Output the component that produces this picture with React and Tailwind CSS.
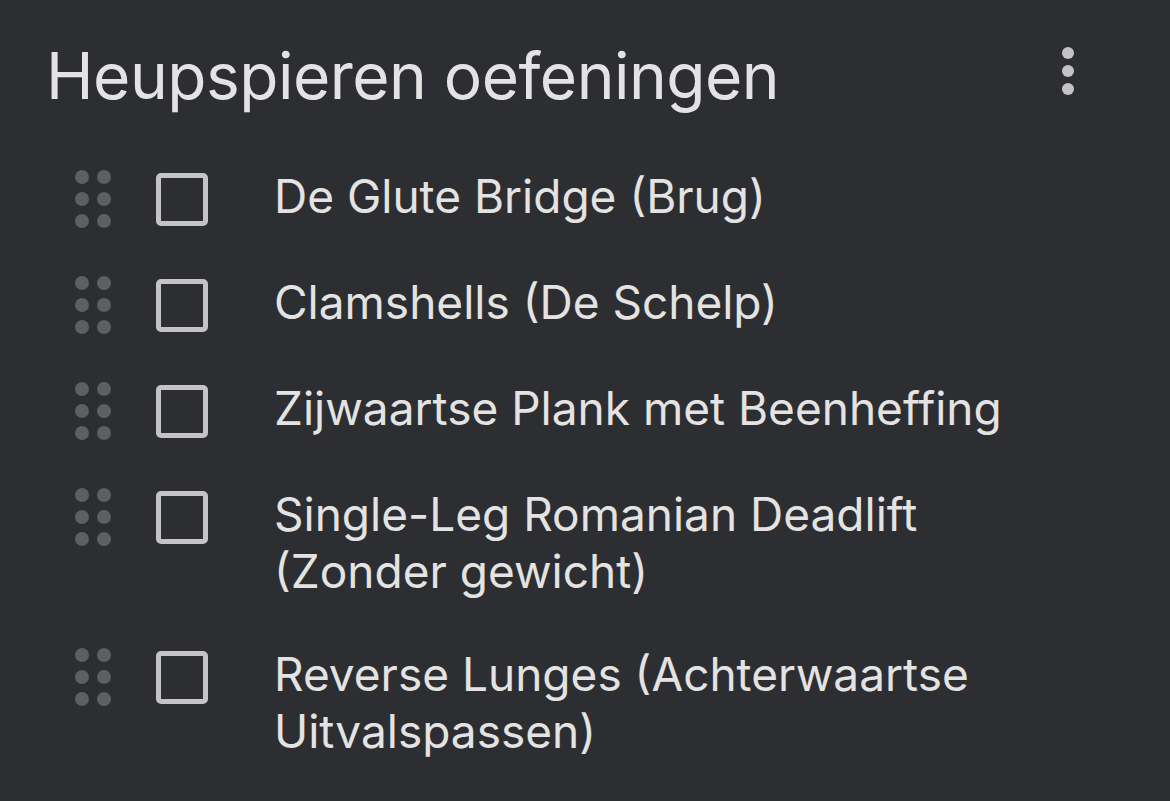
const items = [
  'De Glute Bridge (Brug)',
  'Clamshells (De Schelp)',
  'Zijwaartse Plank met Beenheffing',
  'Single-Leg Romanian Deadlift (Zonder gewicht)',
  'Reverse Lunges (Achterwaartse Uitvalspassen)',
]

function Grip() {
  return (
    <div className="grid grid-cols-2 gap-x-[8px] gap-y-[8px]">
      {[0, 1, 2, 3, 4, 5].map(i => (
        <span key={i} className="block w-[14px] h-[14px] rounded-full bg-[#5e5f62]" />
      ))}
    </div>
  )
}

export default function App() {
  return (
    <div className="min-h-screen bg-[#2d2e31] text-[#e3e3e3] font-['Inter','Liberation_Sans',sans-serif]">
      <div className="flex items-start justify-between pl-[46px] pr-[96px] pt-[36px]">
        <h1 className="text-[64px] leading-[80px] font-normal tracking-[-0.5px]">Heupspieren oefeningen</h1>
        <div className="flex flex-col items-center gap-[6px] pt-[11px]">
          <span className="block w-[12px] h-[12px] rounded-full bg-[#c4c4c6]" />
          <span className="block w-[12px] h-[12px] rounded-full bg-[#c4c4c6]" />
          <span className="block w-[12px] h-[12px] rounded-full bg-[#c4c4c6]" />
        </div>
      </div>
      <ul className="flex flex-col gap-[48px] pl-[75px] pt-[54px]">
        {items.map(t => (
          <li key={t} className="flex items-start">
            <Grip />
            <div className="ml-[45px] mt-[3px] w-[52px] h-[53px] shrink-0 rounded-[5px] border-[5px] border-[#c4c4c7]" />
            <p className="ml-[66px] -mt-[2px] w-[790px] text-[46px] leading-[57px]">{t}</p>
          </li>
        ))}
      </ul>
    </div>
  )
}
